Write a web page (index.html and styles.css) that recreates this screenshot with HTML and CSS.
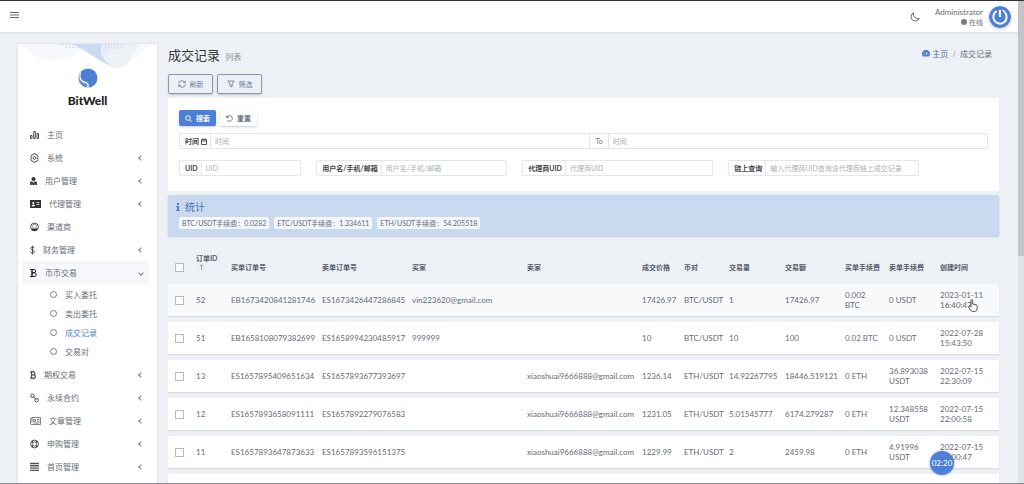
FILE: index.html
```html
<!DOCTYPE html>
<html lang="zh-CN">
    <head>
        <meta charset="UTF-8" />
        <meta name="viewport" content="width=device-width, initial-scale=1.0" />
        <title>成交记录</title>
        <link rel="stylesheet" href="styles.css">
    </head>
    <body>
        <!-- 顶部导航 -->
        <header class="navbar">
            <button class="menu-btn" aria-label="菜单">
                <svg width="9" height="8" viewBox="0 0 9 8"><path d="M0 1.500h9M0 4h9M0 6.500h9" /></svg>
            </button>
            <div class="navbar-right">
                <button class="moon-btn" aria-label="夜间模式">
                    <svg width="10" height="10" viewBox="0 0 10 10"><path d="M3.600.8a4.300 4.300 0 1 0 5.700 5.600A4.400 4.400 0 0 1 3.600.8z" /></svg>
                </button>
                <div class="user">
                    <span>Administrator</span>
                    <span class="status"><i class="dot"></i>在线</span>
                </div>
                <svg class="avatar" width="22" height="22" viewBox="0 0 22 22">
                    <circle cx="11" cy="11" r="11" fill="#4c7fd5" />
                    <path d="M7.500 5.200A6.700 6.700 0 1 0 16 6.500" fill="none" stroke="#fff" stroke-width="2" />
                    <path d="M11 4v7" stroke="#fff" stroke-width="2.200" />
                    <path d="M13.500 4.200a6.700 6.700 0 0 1 2.500 2.300" fill="none" stroke="#fff" stroke-width="1.400" />
                </svg>
            </div>
        </header>

        <div class="wrapper">
            <!-- 侧边栏 -->
            <aside class="sidebar">
                <svg class="wave" viewBox="0 0 139 27" preserveAspectRatio="none">
                    <defs>
                        <pattern id="dots" width="3" height="3" patternUnits="userSpaceOnUse">
                            <path d="M0 0h1v1H0zM1.500 1.500h1v1h-1z" fill="#bdd2ee" />
                        </pattern>
                    </defs>
                    <path d="M0 0h70c-2 6-10 11-22 14-10 2-18 3-25 1C15 12 9 5 0 0z" fill="#f6f8fb" />
                    <path d="M55 0h84c-14 1-22 16-36 24-5 1-8 0-12-2C76 14 70 7 55 0z" fill="#edf1f6" />
                    <path d="M139 0c-12 2-19 11-29 19 4-8 6-14 12-19z" fill="#f6f8fb" />
                    <path d="M55 0h29c-2 6-3 12 9 22C77 15 70 7 55 0z" fill="#c9daf1" />
                    <path d="M40 0h15l8 4H48zM84 0h24l-6 5H83z" fill="url(#dots)" />
                    <path d="M84 3l10 2-9 6z" fill="url(#dots)" />
                </svg>
                <a href="#" class="brand">
                    <svg width="20" height="20" viewBox="0 0 20 20">
                        <circle cx="10" cy="10" r="9.500" fill="#4c7fd5" />
                        <path d="M2.500 4C1 9 2 12.500 6 14c2.500 1 5 1 3.800 5" fill="none" stroke="#fff" stroke-width="1.400" />
                        <path d="M2 4.500C-.5 10 2 14 5 15.500c2 1 3.500 1 3 3.500" fill="none" stroke="#a8a9ae" stroke-width=".8" />
                    </svg>
                    <span>BitWell</span>
                </a>
                <nav class="menu">
                    <a href="#" class="item">
                        <svg width="9" height="10" viewBox="0 0 9 10"><path d="M.5 5.500h1.500v3H.5zM3.700 1.500h1.600v7H3.700zM7 3.500h1.500v5H7z" class="line" /></svg>
                        <span>主页</span>
                    </a>
                    <a href="#" class="item">
                        <svg width="9" height="10" viewBox="0 0 9 10"><path d="M3.500.8h2l.5 1.100 1.200-.1 1 1.700-.7 1.500.7 1.500-1 1.700L6 8.100l-.5 1.100h-2L3 8.100l-1.200.1-1-1.700.7-1.500-.7-1.500 1-1.700 1.200.1z" class="line" /><circle cx="4.500" cy="5" r="1.400" class="line" /></svg>
                        <span>系统</span><i class="arrow"></i>
                    </a>
                    <a href="#" class="item">
                        <svg width="7" height="10" viewBox="0 0 7 10"><circle cx="3.500" cy="3" r="2" /><path d="M0 9V7.300q0-2 2-2l1.500 1.500L5 5.300q2 0 2 2V9z" /><path d="M2 9V7.500M5 9V7.500" stroke="#fff" stroke-width=".6" /></svg>
                        <span>用户管理</span><i class="arrow"></i>
                    </a>
                    <a href="#" class="item">
                        <svg width="11" height="10" viewBox="0 0 11 10"><path d="M0 1h11v8H0z" /><circle cx="3.300" cy="4" r="1.100" fill="#fff" /><path d="M1.500 7.200q0-1.800 1.800-1.800t1.800 1.800zM6.500 3.200h3v.8h-3zM6.500 5.200h3V6h-3z" fill="#fff" /></svg>
                        <span>代理管理</span><i class="arrow"></i>
                    </a>
                    <a href="#" class="item">
                        <svg width="9" height="10" viewBox="0 0 9 10"><circle cx="4.500" cy="5" r="3.900" class="line" /><circle cx="4.500" cy="4.200" r="2" fill="none" stroke="#555" stroke-width=".6" /><path d="M1.300 7.300q.7-.8 1.700-1 1.500 1 3 0 1 .2 1.700 1Q6.500 9 4.500 9T1.300 7.300z" /></svg>
                        <span>渠道商</span>
                    </a>
                    <a href="#" class="item">
                        <svg width="5" height="10" viewBox="0 0 5 10"><path d="M4.400 3.200Q4.200 2 2.500 2T.6 3.400c0 2 3.900 1.200 3.900 3.200C4.500 7.600 3.700 8 2.500 8S.5 7.600.5 6.600M2.500.5v9" class="line" /></svg>
                        <span>财务管理</span><i class="arrow"></i>
                    </a>
                    <a href="#" class="item open">
                        <svg width="7" height="10" viewBox="0 0 7 10"><path d="M0 1.500h4M0 8.500h4" stroke="#222" stroke-width="1" /><path d="M2 1.500v7" stroke="#222" stroke-width="1.500" /><path d="M2 1.500h1.800q1.800 0 1.800 1.600T3.800 4.800H2h2q2.300 0 2.300 1.900T4 8.500H2" fill="none" stroke="#222" stroke-width="1" /></svg>
                        <span>币币交易</span><i class="arrow"></i>
                    </a>
                    <div class="submenu">
                        <a href="#"><i class="ring"></i>买入委托</a>
                        <a href="#"><i class="ring"></i>卖出委托</a>
                        <a href="#" class="current"><i class="ring"></i>成交记录</a>
                        <a href="#"><i class="ring"></i>交易对</a>
                    </div>
                    <a href="#" class="item">
                        <svg width="6" height="10" viewBox="0 0 6 10"><path d="M0 2h3.200q1.700 0 1.700 1.400T3.300 4.900H1.500h2q1.900 0 1.900 1.600T3.500 8H0M1.500 2v6M2 .7V2M3.700.7V2M2 8v1.300M3.700 8v1.300" fill="none" stroke="#4c4f57" stroke-width="1.200" /></svg>
                        <span>期权交易</span><i class="arrow"></i>
                    </a>
                    <a href="#" class="item">
                        <svg width="9" height="10" viewBox="0 0 9 10"><rect x=".7" y="1" width="3.400" height="3.400" rx="1.500" class="line" /><rect x="4.900" y="5.400" width="3.400" height="3.400" rx="1.500" class="line" /><path d="M3 3.200l3.300 3.500" class="line" /></svg>
                        <span>永续合约</span><i class="arrow"></i>
                    </a>
                    <a href="#" class="item">
                        <svg width="11" height="10" viewBox="0 0 11 10"><path d="M2 1.500h8.500v7H1.500q-1 0-1-1v-5H2zM2 2v5M3.500 3.500h2v2h-2zM7 3.500h2.500M7 5.200h2.500M3.500 7h6" class="thin" /></svg>
                        <span>文章管理</span><i class="arrow"></i>
                    </a>
                    <a href="#" class="item">
                        <svg width="9" height="10" viewBox="0 0 9 10"><circle cx="4.500" cy="5" r="3.900" class="line" /><circle cx="4.500" cy="5" r="2" class="thin" /><path d="M1.800 2.300l1.200 1.200M7.200 2.300L6 3.500M1.800 7.700L3 6.500M7.200 7.700L6 6.500" stroke="#333" stroke-width="1.500" /></svg>
                        <span>申购管理</span><i class="arrow"></i>
                    </a>
                    <a href="#" class="item">
                        <svg width="9" height="10" viewBox="0 0 9 10"><path d="M0 1.500h9M0 3.800h9M0 6.100h9M0 8.400h9" fill="none" stroke="#555" stroke-width="1.400" /></svg>
                        <span>首页管理</span><i class="arrow"></i>
                    </a>
                </nav>
            </aside>

            <!-- 内容 -->
            <main class="content">
                <div class="content-header">
                    <h1>成交记录 <small>列表</small></h1>
                    <div class="breadcrumb">
                        <a href="#">
                            <svg width="8" height="7" viewBox="0 0 8 7"><path d="M1 6.500A4 4 0 1 1 7 6.500z" fill="#4c7fd5" /><path d="M4 5l1.200-2.700M1.500 4.200h.8M5.800 4.200h.8M2.300 2.200l.5.600" stroke="#fff" stroke-width=".7" /></svg>
                            主页</a>
                        <span class="slash">/</span>
                        <span>成交记录</span>
                    </div>
                </div>
                <div class="toolbar">
                    <button class="btn-outline">
                        <svg width="8" height="8" viewBox="0 0 8 8"><path d="M.6 3.500A3.300 3.300 0 0 1 6.800 2.500M7.400 4.500A3.300 3.300 0 0 1 1.200 5.500M7.300.8v2H5.200M.7 7.200v-2h2.100" /></svg>
                        刷新
                    </button>
                    <button class="btn-outline">
                        <svg width="8" height="8" viewBox="0 0 8 8"><path d="M.8 1h6.400L5 4v3L3 6V4z" /></svg>
                        筛选
                    </button>
                </div>

                <!-- 筛选 -->
                <form class="card filter">
                    <div class="filter-btns">
                        <button type="button" class="btn btn-primary">
                            <svg width="7" height="7" viewBox="0 0 7 7"><circle cx="3" cy="3" r="2.300" /><path d="M4.700 4.700l2 2" /></svg>
                            搜索
                        </button>
                        <button type="button" class="btn btn-white">
                            <svg width="7" height="7" viewBox="0 0 7 7"><path d="M1 2.200A2.800 2.800 0 1 1 1.200 5M.6.500v2h2" /></svg>
                            重置
                        </button>
                    </div>
                    <div class="group">
                        <label for="start">时间
                            <svg width="6" height="7" viewBox="0 0 6 7"><path d="M.5 1.500h5v5h-5zM.5 3h5M1.700.3v1M4.300.3v1" /></svg>
                        </label>
                        <input type="text" id="start" placeholder="时间">
                        <label for="end" class="to">To</label>
                        <input type="text" id="end" placeholder="时间">
                    </div>
                    <div class="filter-row">
                        <div class="group col-2">
                            <label for="uid">UID</label>
                            <input type="text" id="uid" placeholder="UID">
                        </div>
                        <div class="group">
                            <label for="name">用户名/手机/邮箱</label>
                            <input type="text" id="name" placeholder="用户名/手机/邮箱">
                        </div>
                        <div class="group">
                            <label for="agent">代理商UID</label>
                            <input type="text" id="agent" placeholder="代理商UID">
                        </div>
                        <div class="group">
                            <label for="chain">链上查询</label>
                            <input type="text" id="chain" placeholder="输入代理商UID查询该代理商链上成交记录">
                        </div>
                    </div>
                </form>

                <!-- 统计 -->
                <section class="stat">
                    <h2>
                        <svg width="4" height="8" viewBox="0 0 4 8"><path d="M1 0h2v2H1zM0 3h3v4h1v1H0V7h1V4H0z" fill="#4c7fd5" /></svg>
                        统计
                    </h2>
                    <div class="tags">
                        <span>BTC/USDT手续费：0.0282</span>
                        <span>ETC/USDT手续费：1.334611</span>
                        <span>ETH/USDT手续费：54.205518</span>
                    </div>
                </section>

                <table class="grid">
                    <colgroup>
                        <col class="c-check"><col class="c-id"><col class="c-buy"><col class="c-sell">
                        <col class="c-mail"><col class="c-mail"><col class="c-price"><col class="c-pair">
                        <col class="c-num"><col class="c-total"><col class="c-fee"><col class="c-fee2"><col class="c-time">
                    </colgroup>
                    <thead>
                        <tr>
                            <th><input type="checkbox" aria-label="全选"></th>
                            <th class="th-id">订单ID <a href="#" class="sort" aria-label="排序"><svg width="5" height="6" viewBox="0 0 5 6"><path d="M2.500 6V.8M.5 2.600l2-2 2 2" /></svg></a></th>
                            <th>买单订单号</th>
                            <th>卖单订单号</th>
                            <th>买家</th>
                            <th>卖家</th>
                            <th>成交价格</th>
                            <th>币对</th>
                            <th>交易量</th>
                            <th>交易额</th>
                            <th>买单手续费</th>
                            <th>卖单手续费</th>
                            <th>创建时间</th>
                        </tr>
                    </thead>
                    <tbody>
                        <tr class="hover">
                            <td><input type="checkbox" aria-label="52"></td>
                            <td>52</td><td>EB1673420841281746</td><td>ES1673426447286845</td>
                            <td>vin223620@gmail.com</td><td></td>
                            <td>17426.97</td><td>BTC/USDT</td><td>1</td><td>17426.97</td>
                            <td>0.002 BTC</td><td>0 USDT</td><td>2023-01-11 16:40:47</td>
                        </tr>
                        <tr>
                            <td><input type="checkbox" aria-label="51"></td>
                            <td>51</td><td>EB1658108079382699</td><td>ES1658994230485917</td>
                            <td>999999</td><td></td>
                            <td>10</td><td>BTC/USDT</td><td>10</td><td>100</td>
                            <td>0.02 BTC</td><td>0 USDT</td><td>2022-07-28 15:43:50</td>
                        </tr>
                        <tr>
                            <td><input type="checkbox" aria-label="13"></td>
                            <td>13</td><td>ES1657895409651634</td><td>ES1657893677393697</td>
                            <td></td><td>xiaoshuai9666888@gmail.com</td>
                            <td>1236.14</td><td>ETH/USDT</td><td>14.92267795</td><td>18446.519121</td>
                            <td>0 ETH</td><td>36.893038 USDT</td><td>2022-07-15 22:30:09</td>
                        </tr>
                        <tr>
                            <td><input type="checkbox" aria-label="12"></td>
                            <td>12</td><td>ES1657893658091111</td><td>ES1657892279076583</td>
                            <td></td><td>xiaoshuai9666888@gmail.com</td>
                            <td>1231.05</td><td>ETH/USDT</td><td>5.01545777</td><td>6174.279287</td>
                            <td>0 ETH</td><td>12.348558 USDT</td><td>2022-07-15 22:00:58</td>
                        </tr>
                        <tr>
                            <td><input type="checkbox" aria-label="11"></td>
                            <td>11</td><td>ES1657893647873633</td><td>ES1657893596151375</td>
                            <td></td><td>xiaoshuai9666888@gmail.com</td>
                            <td>1229.99</td><td>ETH/USDT</td><td>2</td><td>2459.98</td>
                            <td>0 ETH</td><td>4.91996 USDT</td><td>2022-07-15 22:00:47</td>
                        </tr>
                        <tr>
                            <td colspan="13"></td>
                        </tr>
                    </tbody>
                </table>
            </main>
        </div>

        <!-- 滚动条 -->
        <div class="scrollbar"><div class="thumb"></div></div>
        <!-- 计时 -->
        <div class="timer">02:20</div>
        <!-- 鼠标 -->
        <svg class="cursor" width="10" height="13" viewBox="0 0 10 13">
            <path d="M3 8V1.500q0-1 .8-1t.8 1V5l3.400.8q1.400.3 1.300 1.600L9 10q-.3 2.500-2.500 2.500h-1.500Q3.500 12.500 2.500 11L.7 8.300q-.4-.9.300-1.200.7-.2 1.200.3z" fill="#fff" stroke="#444" stroke-width=".9" />
        </svg>
    </body>
</html>
```
FILE: styles.css
```css
* {
    margin: unset;
    padding: unset;
    box-sizing: border-box;
}
body {
    height: 100vh;
    display: flex;
    flex-direction: column;
    overflow: hidden;
    position: relative;
    border-top: 1px solid #333;
    border-bottom: 1px solid #888b90;
    background-color: #edf1f6;
    color: #656b77;
    font: 8px/10px Lato, "Noto Sans CJK SC", sans-serif;
}
a {
    color: inherit;
    text-decoration: none;
}
button,
input {
    font: inherit;
    color: inherit;
    border: none;
    background: none;
}
svg {
    flex-shrink: 0;
}

/* 顶部导航 */
.navbar {
    flex-shrink: 0;
    display: flex;
    align-items: center;
    justify-content: space-between;
    height: 31px;
    padding: 0 13px 0 10px;
    background-color: #fff;
    box-shadow: 0 1px 2px rgba(60, 80, 110, 0.15);
}
.menu-btn,
.moon-btn {
    display: flex;
}
.menu-btn {
    margin-bottom: 4px;
}
.menu-btn path,
.moon-btn path {
    fill: none;
    stroke: #666b75;
}
.navbar-right {
    display: flex;
    align-items: center;
}
.user {
    display: flex;
    flex-direction: column;
    align-items: flex-end;
    margin: 0 6px 0 15px;
}
.status {
    display: flex;
    align-items: center;
    gap: 2px;
    font-size: 7px;
}
.dot {
    width: 6px;
    height: 6px;
    border-radius: 50%;
    background-color: #777c86;
}
.avatar {
    border-radius: 50%;
    box-shadow: 0 1px 3px rgba(60, 80, 110, 0.35);
}

.wrapper {
    flex: 1;
    min-height: 0;
    display: flex;
    align-items: flex-start;
    gap: 11px;
    padding: 12px 25px 0 18px;
    overflow: hidden;
}

/* 侧边栏 */
.sidebar {
    flex: 0 0 139px;
    position: relative;
    padding-bottom: 20px;
    background-color: #fff;
    box-shadow: 0 0 2px rgba(60, 80, 110, 0.15);
}
.wave {
    position: absolute;
    top: 0;
    left: 0;
    width: 100%;
    height: 27px;
}
.brand {
    position: relative;
    display: flex;
    flex-direction: column;
    align-items: center;
    gap: 6px;
    padding: 24px 0 15px;
    color: #222;
    font-size: 12px;
    line-height: 14px;
    font-weight: 900;
}
.menu {
    padding: 0 8px 0 4px;
}
.item {
    display: flex;
    align-items: center;
    gap: 8px;
    height: 23px;
    padding: 0 6px 0 8px;
    fill: #333;
}
.item .line,
.item .thin {
    fill: none;
    stroke: #4c4f57;
}
.item .thin {
    stroke-width: 0.7;
}
.item.open {
    background-color: #f5f7fa;
}
.arrow {
    width: 4px;
    height: 4px;
    margin-left: auto;
    border-left: 1px solid #777c86;
    border-bottom: 1px solid #777c86;
    transform: rotate(45deg);
}
.open .arrow {
    transform: rotate(-45deg);
}
.submenu {
    padding: 1px 0 2px 28px;
}
.submenu a {
    display: flex;
    align-items: center;
    gap: 8px;
    height: 19px;
}
.ring {
    width: 7px;
    height: 7px;
    border: 1px solid #777c86;
    border-radius: 50%;
}
.submenu .current {
    color: #4c7fd5;
}

/* 内容 */
.content {
    flex: 1;
    min-width: 0;
}
.content-header {
    display: flex;
    align-items: flex-start;
    justify-content: space-between;
    height: 24px;
    padding: 1px 7px 0 0;
}
h1 {
    color: #333;
    font-size: 13px;
    font-weight: 400;
    line-height: 20px;
}
h1 small {
    margin-left: 2px;
    color: #888d98;
    font-size: 8px;
}
.breadcrumb {
    display: flex;
    gap: 4px;
    padding-top: 4px;
}
.breadcrumb a {
    color: #4c6fb0;
}
.slash {
    color: #999;
}
.toolbar {
    display: flex;
    gap: 4px;
    padding: 6px 0 4px;
}
.btn-outline,
.btn {
    display: flex;
    align-items: center;
    justify-content: center;
    gap: 4px;
    border-radius: 2px;
}
.btn-outline {
    width: 45px;
    height: 20px;
    border: 1px solid #8b98af;
    color: #6a7f9f;
    box-shadow: 0 1px 2px rgba(60, 80, 110, 0.25);
    font-size: 7px;
}
.btn-outline path,
.btn svg,
.group path {
    fill: none;
    stroke: currentColor;
    stroke-width: 0.9;
}
.card {
    padding: 12px 11px 15px;
    background-color: #fff;
}
.filter-btns {
    display: flex;
    gap: 4px;
    margin-bottom: 7px;
}
.btn {
    height: 16px;
    padding: 0 6px;
    font-size: 7px;
    font-weight: 700;
    box-shadow: 0 1px 2px rgba(60, 80, 110, 0.3);
}
.btn-primary {
    background-color: #4c7fd5;
    color: #fff;
}
.filter-row {
    display: grid;
    grid-template-columns: repeat(12, 1fr);
    gap: 15px;
    margin-top: 11px;
}
.group {
    grid-column: span 3;
    display: flex;
    height: 16px;
    border: 1px solid #e2e7ee;
    border-radius: 2px;
    font-size: 7px;
}
.col-2 {
    grid-column: span 2;
}
.group label {
    display: flex;
    align-items: center;
    gap: 2px;
    padding: 0 3px 0 5px;
    white-space: nowrap;
    color: #444;
    font-weight: 700;
}
.group input {
    flex: 1;
    min-width: 0;
    padding: 0 4px;
    border-left: 1px solid #e2e7ee;
}
.group .to {
    padding: 0 5px;
    border-left: 1px solid #e2e7ee;
    color: #777c86;
    font-weight: 400;
}
.group input::placeholder {
    color: #a9afba;
}

/* 统计 */
.stat {
    margin-top: 4px;
    padding: 6px 8px 7px;
    border-radius: 2px;
    background-color: #c9daf0;
    box-shadow: 0 1px 2px rgba(60, 80, 110, 0.25);
}
h2 {
    display: flex;
    align-items: center;
    gap: 5px;
    color: #4a6fae;
    font-size: 10px;
    font-weight: 400;
    line-height: 12px;
}
.tags {
    display: flex;
    gap: 5px;
    margin: 4px 0 0 3px;
    font-size: 7px;
}
.tags span {
    padding: 1px 3px;
    border-radius: 2px;
    background-color: #f3f7fc;
}

/* 表格 */
.grid {
    width: 100%;
    margin-top: 6px;
    table-layout: fixed;
    border-collapse: separate;
    border-spacing: 0 6px;
}
.c-check { width: 24px; }
.c-id { width: 35px; }
.c-buy { width: 91px; }
.c-sell { width: 90px; }
.c-mail { width: 115px; }
.c-price { width: 42px; }
.c-pair { width: 45px; }
.c-num { width: 56px; }
.c-total { width: 60px; }
.c-fee { width: 44px; }
.c-fee2 { width: 51px; }
.c-time { width: 63px; }
.grid th {
    height: 30px;
    padding: 0 4px 6px;
    vertical-align: bottom;
    text-align: left;
    font-size: 7px;
    font-weight: 700;
    color: #555b66;
    white-space: nowrap;
}
.grid .th-id {
    padding-bottom: 8px;
}
.grid td {
    height: 32px;
    padding: 0 4px;
    background-color: #fff;
}
.grid tbody tr {
    box-shadow: 0 1px 1px rgba(60, 80, 110, 0.12);
}
.grid .hover td {
    background-color: #f7f9fb;
}
.grid td:first-child,
.grid th:first-child {
    padding-left: 7px;
}
.grid input {
    display: block;
    appearance: none;
    width: 9px;
    height: 9px;
    border: 1px solid #b4bbc8;
    background-color: #fff;
}
.sort {
    display: block;
    padding: 1px 0 0 3px;
}
.sort svg {
    display: block;
    fill: none;
    stroke: #999;
    stroke-width: 0.8;
}

/* 浮层 */
.scrollbar {
    position: absolute;
    top: 0;
    right: 0;
    bottom: 0;
    width: 6px;
    background-color: #dfe2e7;
}
.thumb {
    height: 53%;
    background-color: #c3c4c8;
}
.timer {
    position: absolute;
    right: 70px;
    bottom: 8px;
    width: 24px;
    height: 24px;
    border-radius: 50%;
    background-color: #4c7fd5;
    color: #fff;
    line-height: 24px;
    text-align: center;
    box-shadow: 0 0 3px rgba(60, 80, 110, 0.5);
}
.cursor {
    position: absolute;
    top: 298px;
    right: 46px;
}
```
